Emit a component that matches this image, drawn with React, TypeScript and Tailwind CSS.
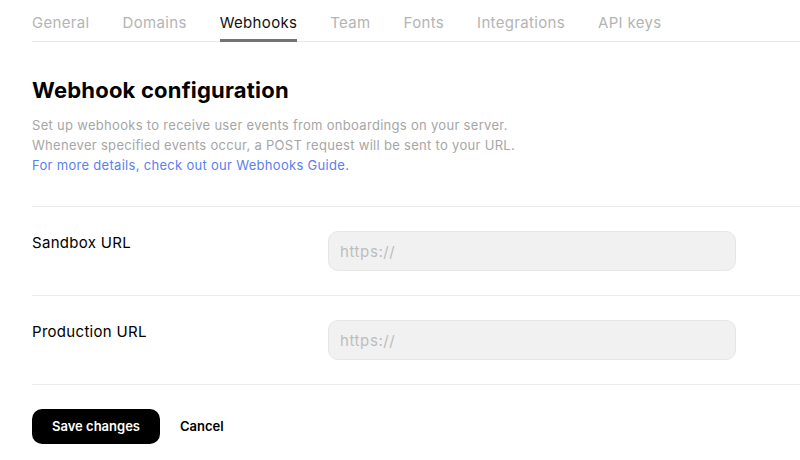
import { useState } from 'react';

const TABS = ['General', 'Domains', 'Webhooks', 'Team', 'Fonts', 'Integrations', 'API keys'];

export default function App() {
  const [active, setActive] = useState('Webhooks');
  const [sandbox, setSandbox] = useState('');
  const [production, setProduction] = useState('');

  return (
    <div className="min-h-screen bg-white pl-8 text-black" style={{ fontFamily: 'Inter, "Noto Sans", sans-serif' }}>
      {/* Tabs */}
      <nav className="flex gap-[33px] border-b border-[#e8e8e8]">
        {TABS.map(t => (
          <button
            key={t}
            onClick={() => setActive(t)}
            className={`relative pt-[13px] pb-[9px] text-[15px] leading-[19px] tracking-[0.33px] ${active === t ? 'text-[#111]' : 'text-[#b4b4b4]'}`}
          >
            {t}
            {active === t && <span className="absolute left-0 right-0 -bottom-px h-[3px] bg-[#737373]" />}
          </button>
        ))}
      </nav>

      {/* Header */}
      <div className="pt-[34px] pb-[31px] border-b border-[#ebebeb]">
        <h1 className="text-[22px] leading-[28px] font-bold tracking-[0.2px]">Webhook configuration</h1>
        <p className="mt-[11px] text-[13px] leading-[20px] tracking-[0.3px] text-[#a6a6a6]">
          Set up webhooks to receive user events from onboardings on your server.
          <br />
          Whenever specified events occur, a POST request will be sent to your URL.
          <br />
          <a href="#" className="text-[#5b7ff0]">For more details, check out our Webhooks Guide.</a>
        </p>
      </div>

      {/* Sandbox URL */}
      <div className="flex items-start border-b border-[#ebebeb] pt-[24px] pb-[24px]">
        <label className="w-[296px] pt-[2px] text-[15px] leading-[20px] tracking-[0.3px]">Sandbox URL</label>
        <input
          value={sandbox}
          onChange={e => setSandbox(e.target.value)}
          placeholder="https://"
          className="w-[408px] h-[40px] rounded-[10px] border border-[#e6e6e6] bg-[#f1f1f1] px-[11px] text-[15px] tracking-[0.6px] placeholder-[#bdbdbd] outline-none"
        />
      </div>

      {/* Production URL */}
      <div className="flex items-start border-b border-[#ebebeb] pt-[24px] pb-[24px]">
        <label className="w-[296px] pt-[2px] text-[15px] leading-[20px] tracking-[0.3px]">Production URL</label>
        <input
          value={production}
          onChange={e => setProduction(e.target.value)}
          placeholder="https://"
          className="w-[408px] h-[40px] rounded-[10px] border border-[#e6e6e6] bg-[#f1f1f1] px-[11px] text-[15px] tracking-[0.6px] placeholder-[#bdbdbd] outline-none"
        />
      </div>

      {/* Actions */}
      <div className="flex items-center gap-[20px] pt-[24px]">
        <button className="h-[35px] w-[128px] rounded-[10px] bg-black text-[13px] font-semibold text-white">Save changes</button>
        <button className="text-[13px] font-semibold text-black">Cancel</button>
      </div>
    </div>
  );
}
